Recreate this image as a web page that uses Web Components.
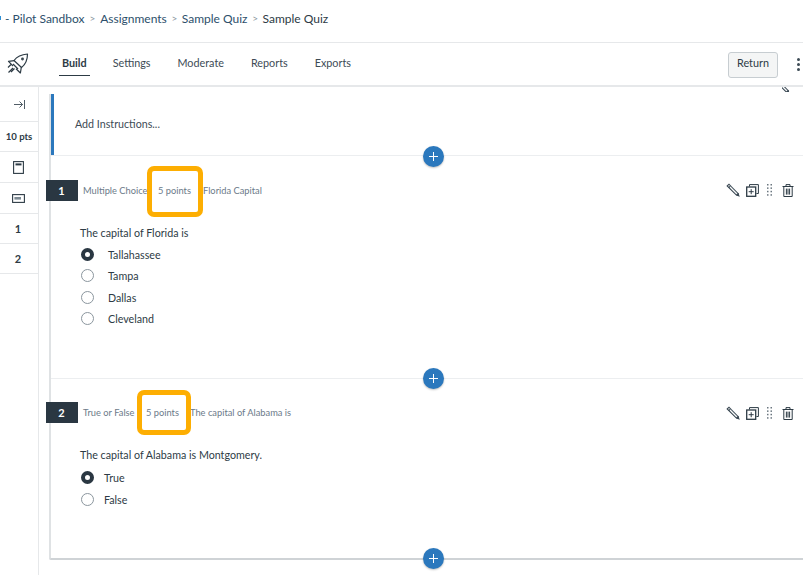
<!DOCTYPE html>
<html>
<head>
<meta charset="utf-8">
<style>
  html, body { margin: 0; height: 100%; overflow: hidden; background: #fff; }
  body { font-family: Lato, "Liberation Sans", sans-serif; color: #2d3b45; }
</style>
</head>
<body>
<quiz-app>
  <quiz-crumbs slot="crumbs"></quiz-crumbs>
  <quiz-toolbar slot="bar"></quiz-toolbar>
  <quiz-side slot="side"></quiz-side>
  <quiz-question style="--h:223px;--top:24px;--nh:21px;--kw:75px;--pw:45px" num="1" kind="Multiple Choice" pts="5 points" name="Florida Capital"
    text="The capital of Florida is" flag="left:96px;top:10px;width:56px;height:51px">
    <quiz-answer checked>Tallahassee</quiz-answer>
    <quiz-answer>Tampa</quiz-answer>
    <quiz-answer>Dallas</quiz-answer>
    <quiz-answer>Cleveland</quiz-answer>
  </quiz-question>
  <quiz-question style="--h:180px;--top:22.5px;--nh:21.5px;--kw:63px;--pw:44px;--ans-gap:10px;--ah:22px;border-bottom:0" num="2" kind="True or False" pts="5 points" name="The capital of Alabama is"
    text="The capital of Alabama is Montgomery." flag="left:86px;top:11px;width:54px;height:45px">
    <quiz-answer checked>True</quiz-answer>
    <quiz-answer>False</quiz-answer>
  </quiz-question>
</quiz-app>

<script>
const icons = {
  pencil: `<svg width="14" height="14" viewBox="0 0 14 14" fill="none" stroke="#3a4853" stroke-width="1.1"><path d="M1.2 3 3 1.2l9 9.3.9 2.4-2.5-.8z"/><path d="M2.8 4.6 4.6 2.8" /><path d="M4 2.6l8 8.4" stroke="#9aa3aa" stroke-width=".8"/><path d="M10.6 12.4l2-2" stroke-width="1.6"/></svg>`,
  copy: `<svg width="13" height="13" viewBox="0 0 13 13" fill="none" stroke="#2d3b45"><path d="M3.5 2.5V.6h8.9v8.9h-2" stroke-width="1"/><rect x=".7" y="3" width="9" height="9.3" stroke-width="1.3"/><path d="M5.2 5.2v5M2.7 7.7h5" stroke-width="1"/></svg>`,
  drag: `<svg width="5" height="12" viewBox="0 0 5 12" fill="#6b7780"><rect x="0" y="0" width="1.5" height="1.5"/><rect x="3.5" y="0" width="1.5" height="1.5"/><rect x="0" y="3.4" width="1.5" height="1.5"/><rect x="3.5" y="3.4" width="1.5" height="1.5"/><rect x="0" y="6.8" width="1.5" height="1.5"/><rect x="3.5" y="6.8" width="1.5" height="1.5"/><rect x="0" y="10.2" width="1.5" height="1.5"/><rect x="3.5" y="10.2" width="1.5" height="1.5"/></svg>`,
  trash: `<svg width="12" height="13" viewBox="0 0 12 13" fill="none" stroke="#2d3b45" stroke-width="1"><path d="M.5 2.5h11M4 2.5V.6h4v1.9M1.8 2.5v10h8.4v-10M4.4 4.6v6M6 4.6v6M7.6 4.6v6"/></svg>`
};

// top breadcrumb line
class QuizCrumbs extends HTMLElement {
  connectedCallback() {
    this.attachShadow({ mode: 'open' });
    this.shadowRoot.innerHTML = `
      <style>
        :host { display: flex; align-items: center; height: 42px; border-bottom: 1px solid #e6e8ea; font-size: 12px; white-space: nowrap; color: #2d3b45; overflow: hidden; }
        .in { display: flex; align-items: center; margin-bottom: 6px; }
        .tick { width: 1px; height: 4px; background: #2d8fd5; margin-right: 4px; }
        a { color: #2d4f6b; }
        i { font-style: normal; color: #8b969e; font-size: 10px; width: 15px; text-align: center; }
        i:first-of-type { width: 15.6px; }
      </style>
      <div class="in">
        <span class="tick"></span>
        <a>- Pilot Sandbox</a><i>&gt;</i><a>Assignments</a><i>&gt;</i><a>Sample Quiz</a><i>&gt;</i><span>Sample Quiz</span>
      </div>`;
  }
}

// rocket logo, tabs and Return button
class QuizToolbar extends HTMLElement {
  connectedCallback() {
    this.attachShadow({ mode: 'open' });
    this.shadowRoot.innerHTML = `
      <style>
        :host { display: flex; align-items: stretch; height: 42px; border-bottom: 2px solid #e6e8ea; font-size: 10.8px; }
        .logo { width: 36px; display: flex; align-items: center; justify-content: center; }
        nav { display: flex; margin-left: 26px; gap: 27px; flex: 1; }
        nav a { display: flex; align-items: center; color: #3d4b55; height: 33px; box-sizing: border-box; padding-top: 6px; }
        nav a.on { font-weight: 700; color: #2d3b45; border-bottom: 1px solid #2d3b45; padding: 6px 3px 0; margin: 0 -4px 0 -3px; }
        button { font: inherit; color: #2d3b45; width: 50px; height: 26px; align-self: center; margin-top: 1px; background: #f4f5f5; border: 1px solid #c7cdd1; border-radius: 3px; padding: 0 0 4px; }
        .dots { width: 25px; display: flex; flex-direction: column; align-items: center; justify-content: center; gap: 2px; padding-left: 16px; box-sizing: border-box; overflow: hidden; }
        .dots b { width: 3px; height: 3px; background: #3d4b55; border-radius: 50%; flex: none; }
      </style>
      <div class="logo">
        <svg width="22" height="22" viewBox="0 0 22 22" fill="none" stroke="#2d3b45" stroke-width="1.2" stroke-linejoin="round">
          <path d="M7 7.5C10 3.5 15 1.5 20.5 1c0 5-1.5 10-6 13.5l-7.5-7z"/>
          <path d="M7.2 7.6 1.5 8.4 6 13M14.3 14.3 13.4 20 9 15.7"/>
          <path d="M6 11 11 16" />
          <path d="M1 14.5 4 11.5M4 19l3.5-3.5M1.5 19.5 6 15"/>
          <circle cx="15.5" cy="6" r="0.8"/>
        </svg>
      </div>
      <nav>
        <a class="on">Build</a><a>Settings</a><a>Moderate</a><a>Reports</a><a>Exports</a>
      </nav>
      <button>Return</button>
      <div class="dots"><b></b><b></b><b></b></div>`;
  }
}

// narrow column with total points and question links
class QuizSide extends HTMLElement {
  connectedCallback() {
    this.attachShadow({ mode: 'open' });
    this.shadowRoot.innerHTML = `
      <style>
        :host { display: block; width: 38px; height: 100%; border-right: 1px solid #e6e8ea; font-size: 11px; font-weight: 700; color: #2d3b45; }
        div { display: flex; align-items: center; justify-content: center; border-bottom: 1px solid #e6e8ea; box-sizing: border-box; height: 30px; padding-right: 2px; }
        .pts { font-size: 9.6px; padding-right: 0; }
      </style>
      <div style="height:35px;padding:0 0 0 1px"><svg width="11" height="9" viewBox="0 0 11 9" fill="none" stroke="#3d4b55" stroke-width="0.9"><path d="M0 4.5h8.5M5.5 1.5l3 3-3 3M10.5 0v9"/></svg></div>
      <div class="pts">10 pts</div>
      <div style="height:31px"><svg width="11" height="13" viewBox="0 0 11 13" fill="none"><rect x=".6" y=".6" width="9.8" height="11.8" stroke="#2d3b45" stroke-width="1.1"/><rect x="2.5" y="2.4" width="6" height="2" fill="#2d3b45"/></svg></div>
      <div style="height:31px"><svg width="13" height="9" viewBox="0 0 13 9" fill="none"><rect x=".6" y=".6" width="11.8" height="7.8" stroke="#2d3b45" stroke-width="1.1"/><rect x="2.4" y="3" width="6.6" height="2.6" fill="#7d8a93"/></svg></div>
      <div>1</div>
      <div>2</div>`;
  }
}

// a round + button that sits over a dividing line
class QuizAdd extends HTMLElement {
  connectedCallback() {
    this.attachShadow({ mode: 'open' });
    this.shadowRoot.innerHTML = `
      <style>
        :host { position: absolute; left: 384px; width: 21px; height: 21px; border-radius: 50%; background: #2b78bd; box-shadow: 0 1px 2px rgba(0,0,0,.25); display: flex; align-items: center; justify-content: center; }
      </style>
      <svg width="9" height="9" viewBox="0 0 9 9" stroke="#fff" stroke-width="1"><path d="M4.5 0v9M0 4.5h9"/></svg>`;
  }
}

// one question: number flag, meta line, text, answers
class QuizQuestion extends HTMLElement {
  connectedCallback() {
    this.attachShadow({ mode: 'open' });
    this.shadowRoot.innerHTML = `
      <style>
        :host { display: block; position: relative; box-sizing: border-box; height: var(--h); padding-top: var(--top); border-bottom: 1px solid #eceef0; }
        .head { display: flex; align-items: center; height: var(--nh); margin-left: -5px; font-size: 9.3px; color: #6c7a89; white-space: nowrap; }
        .num { width: 32px; height: var(--nh); background: #2a3742; color: #fff; font-size: 11px; font-weight: 700; display: flex; align-items: center; justify-content: center; margin-right: 5px; flex: none; padding-right: 1px; box-sizing: border-box; }
        .kind { width: var(--kw); }
        .pts { width: var(--pw); }
        .tools { position: absolute; top: 27px; left: 675px; display: flex; align-items: center; gap: 6px; }
        .tools svg:nth-child(3) { margin: 0 4px 0 2px; }
        .body { margin-left: 29px; }
        p { margin: 25px 0 4px; font-size: 10.7px; line-height: 14px; color: #2d3b45; }
        .flag { position: absolute; border: 5px solid #fdae02; border-radius: 7px; box-sizing: border-box; }
      </style>
      <div class="head">
        <span class="num">${this.getAttribute('num')}</span>
        <span class="kind">${this.getAttribute('kind')}</span><span class="pts">${this.getAttribute('pts')}</span><span>${this.getAttribute('name')}</span>
      </div>
      <div class="tools">${icons.pencil}${icons.copy}${icons.drag}${icons.trash}</div>
      <div class="body">
        <p>${this.getAttribute('text')}</p>
        <slot></slot>
      </div>
      <div class="flag" style="${this.getAttribute('flag')}"></div>`;
  }
}

// radio answer row
class QuizAnswer extends HTMLElement {
  connectedCallback() {
    const on = this.hasAttribute('checked');
    this.attachShadow({ mode: 'open' });
    this.shadowRoot.innerHTML = `
      <style>
        :host { display: flex; align-items: center; height: var(--ah, 21.33px); font-size: 10.7px; color: #2d3b45; }
        .r { width: 13px; height: 13px; border-radius: 50%; box-sizing: border-box; border: ${on ? '4px solid #2a3742' : '1px solid #8b969e'}; background: #fff; flex: none; margin-left: 1px; margin-right: var(--ans-gap, 14px); }
      </style>
      <span class="r"></span><slot></slot>`;
  }
}

// overall page frame
class QuizApp extends HTMLElement {
  connectedCallback() {
    this.attachShadow({ mode: 'open' });
    this.shadowRoot.innerHTML = `
      <style>
        :host { display: flex; flex-direction: column; height: 575px; width: 803px; overflow: hidden; }
        .work { flex: 1; display: flex; min-height: 0; }
        .scroll { flex: 1; position: relative; padding: 7px 0 0 10px; overflow: hidden; }
        .card { position: relative; border-left: 2px solid #dfe2e4; border-bottom: 2px solid #cfd3d6; border-bottom-left-radius: 2px; height: 464px; }
        .instr { height: 62px; box-sizing: border-box; border-bottom: 1px solid #eceef0; position: relative; }
        .bar { position: absolute; left: 0; top: 0; width: 3px; height: 61px; background: #2b78bd; }
        .instr span { position: absolute; left: 24px; top: 23px; font-size: 10.7px; line-height: 14px; color: #3d4b55; }
        .pen { position: absolute; left: 743px; top: 0; width: 8px; height: 5px; overflow: hidden; }
        .pen div { margin: -9px 0 0 -6px; }
      </style>
      <slot name="crumbs"></slot>
      <slot name="bar"></slot>
      <div class="work">
        <slot name="side"></slot>
        <div class="scroll">
          <div class="card">
            <div class="instr"><div class="bar"></div><span>Add Instructions...</span></div>
            <slot></slot>
          </div>
          <div class="pen"><div>${icons.pencil}</div></div>
          <quiz-add style="top:59px"></quiz-add>
          <quiz-add style="top:281px"></quiz-add>
          <quiz-add style="top:461px"></quiz-add>
        </div>
      </div>`;
  }
}

customElements.define('quiz-crumbs', QuizCrumbs);
customElements.define('quiz-toolbar', QuizToolbar);
customElements.define('quiz-side', QuizSide);
customElements.define('quiz-add', QuizAdd);
customElements.define('quiz-answer', QuizAnswer);
customElements.define('quiz-question', QuizQuestion);
customElements.define('quiz-app', QuizApp);
</script>
</body>
</html>
